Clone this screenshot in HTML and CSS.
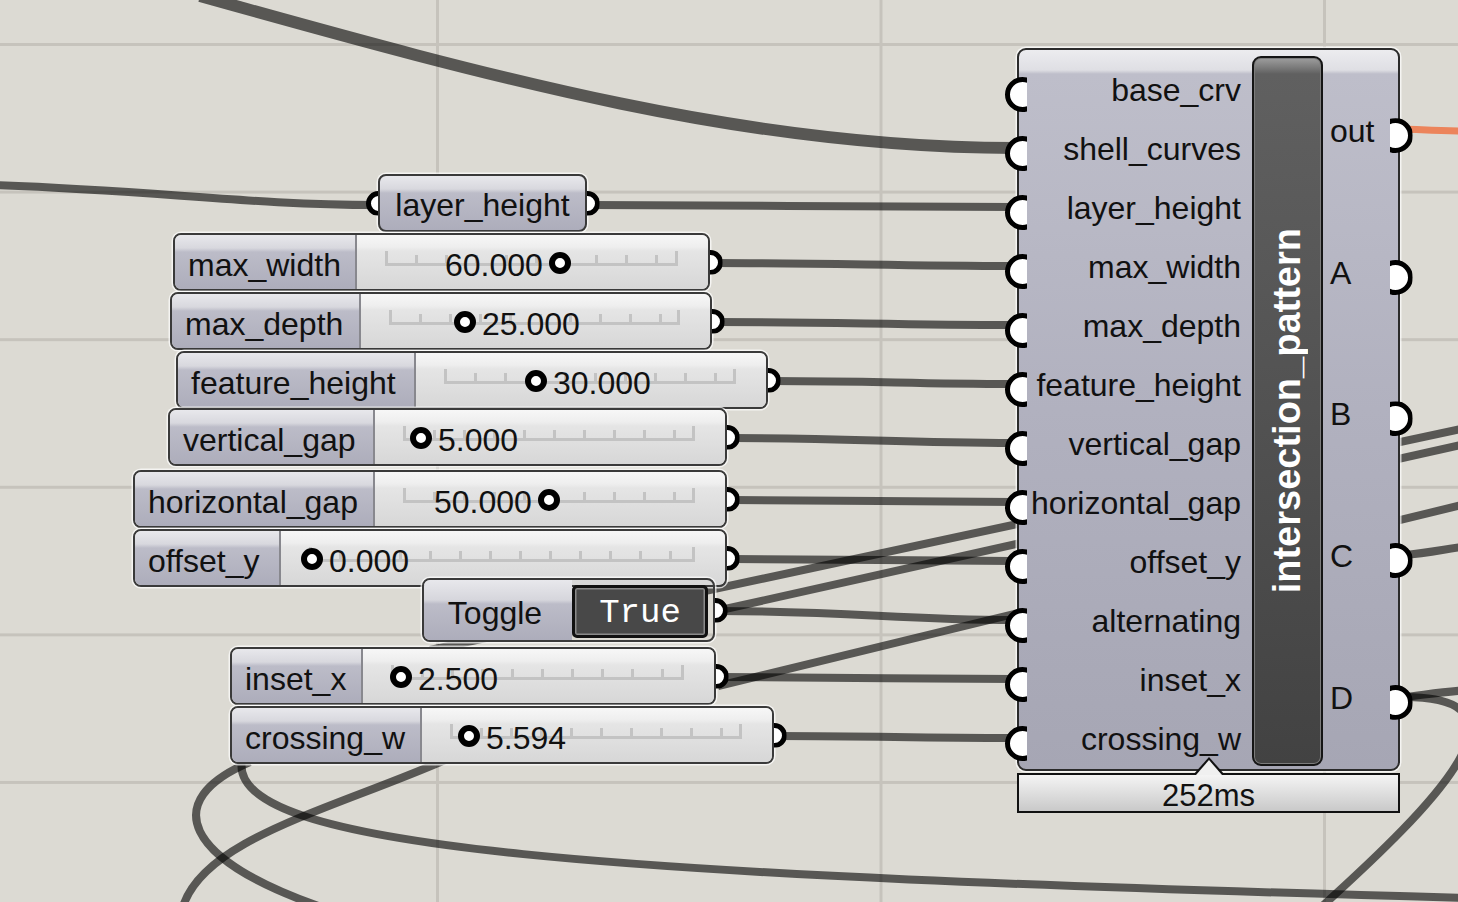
FILE: index.html
```html
<!doctype html>
<html lang="en">
<head>
<meta charset="utf-8">
<title>intersection_pattern</title>
<link rel="stylesheet" href="styles.css">
</head>
<body>
<div id="canvas">

<svg id="wires" width="1458" height="902" viewBox="0 0 1458 902">
  <!-- incoming from off screen -->
  <path class="wire thick" d="M 200 -4 C 500 80, 750 148, 1014 148"/>
  <path class="wire" d="M -10 185 C 150 190, 250 205, 376 205"/>
  <!-- sliders to component -->
  <path class="wire" d="M 590 205 C 720 205, 890 207, 1014 207"/>
  <path class="wire" d="M 714 263 C 830 263, 900 266, 1014 266"/>
  <path class="wire" d="M 716 322 C 830 322, 900 325, 1014 325"/>
  <path class="wire" d="M 772 381 C 880 381, 910 384, 1014 384"/>
  <path class="wire" d="M 731 438 C 850 438, 900 443, 1014 443"/>
  <path class="wire" d="M 731 500 C 850 500, 900 502, 1014 502"/>
  <path class="wire" d="M 731 559 C 850 559, 900 561, 1014 561"/>
  <path class="wire" d="M 718 611 C 850 611, 900 620, 1014 620"/>
  <path class="wire" d="M 720 677 C 850 677, 900 679, 1014 679"/>
  <path class="wire" d="M 778 736 C 880 736, 910 738, 1014 738"/>
  <!-- passing behind the component -->
  <path class="wire" d="M 430 650 L 1470 427"/>
  <path class="wire" d="M 716 611 L 1470 443"/>
  <path class="wire" d="M 718 686 L 1470 503"/>
  <!-- outputs -->
  <path class="wire hot" d="M 1404 129 C 1430 130, 1445 131, 1470 131"/>
  <path class="wire" d="M 1404 555 C 1430 553, 1450 548, 1470 546"/>
  <path class="wire" d="M 1404 697 C 1430 694, 1450 691, 1470 690"/>
  <path class="wire" d="M 1404 697 C 1540 697, 1440 800, 1318 910"/>
  <!-- leaving below -->
  <path class="wire" d="M 242 760 C 225 850, 600 875, 1470 898"/>
  <path class="wire" d="M 445 760 C 330 810, 200 840, 182 910"/>
  <path class="wire" d="M 250 762 C 160 800, 180 860, 330 910"/>
</svg>

<div class="node param" style="left:378px;top:174px;width:209px">
  <span class="port in"></span>
  layer_height
  <span class="port out"></span>
</div>

<div class="node slider" style="left:173px;top:233px;width:537px;--name:180px;--at:88px">
  <div class="name">max_width</div>
  <div class="value"><span class="rail"></span><span class="num">60.000</span><span class="knob"></span></div>
  <span class="port out"></span>
</div>

<div class="node slider" style="left:170px;top:292px;width:542px;--name:187px;--at:93px">
  <div class="name">max_depth</div>
  <div class="value"><span class="rail"></span><span class="knob"></span><span class="num">25.000</span></div>
  <span class="port out"></span>
</div>

<div class="node slider" style="left:176px;top:351px;width:592px;--name:236px;--at:109px">
  <div class="name">feature_height</div>
  <div class="value"><span class="rail"></span><span class="knob"></span><span class="num">30.000</span></div>
  <span class="port out"></span>
</div>

<div class="node slider" style="left:168px;top:408px;width:559px;--name:203px;--at:35px">
  <div class="name">vertical_gap</div>
  <div class="value"><span class="rail"></span><span class="knob"></span><span class="num">5.000</span></div>
  <span class="port out"></span>
</div>

<div class="node slider" style="left:133px;top:470px;width:594px;--name:238px;--at:59px">
  <div class="name">horizontal_gap</div>
  <div class="value"><span class="rail"></span><span class="num">50.000</span><span class="knob"></span></div>
  <span class="port out"></span>
</div>

<div class="node slider" style="left:133px;top:529px;width:594px;--name:144px;--at:20px">
  <div class="name">offset_y</div>
  <div class="value"><span class="rail"></span><span class="knob"></span><span class="num">0.000</span></div>
  <span class="port out"></span>
</div>

<div class="node toggle" style="left:422px;top:578px;width:293px">
  <div class="label">Toggle</div>
  <div class="switch">True</div>
  <span class="port out"></span>
</div>

<div class="node slider" style="left:230px;top:647px;width:486px;--name:129px;--at:27px">
  <div class="name">inset_x</div>
  <div class="value"><span class="rail"></span><span class="knob"></span><span class="num">2.500</span></div>
  <span class="port out"></span>
</div>

<div class="node slider" style="left:230px;top:706px;width:544px;--name:188px;--at:36px">
  <div class="name">crossing_w</div>
  <div class="value"><span class="rail"></span><span class="knob"></span><span class="num">5.594</span></div>
  <span class="port out"></span>
</div>

<div class="component" style="left:1017px;top:48px;width:383px;height:723px">
  <div class="inputs">
    <div class="pin">base_crv</div>
    <div class="pin">shell_curves</div>
    <div class="pin">layer_height</div>
    <div class="pin">max_width</div>
    <div class="pin">max_depth</div>
    <div class="pin">feature_height</div>
    <div class="pin">vertical_gap</div>
    <div class="pin">horizontal_gap</div>
    <div class="pin">offset_y</div>
    <div class="pin">alternating</div>
    <div class="pin">inset_x</div>
    <div class="pin">crossing_w</div>
  </div>
  <div class="title"><span>intersection_pattern</span></div>
  <div class="outputs">
    <div class="pin">out</div>
    <div class="pin">A</div>
    <div class="pin">B</div>
    <div class="pin">C</div>
    <div class="pin">D</div>
  </div>
</div>

<div class="timer" style="left:1017px;top:773px;width:383px">252ms</div>

</div>
</body>
</html>
```

FILE: styles.css
```css
* {
  box-sizing: border-box;
}

html, body {
  margin: 0;
  padding: 0;
  background: #dcdad3;
  overflow: hidden;
}

body {
  font-family: "Liberation Sans", Arial, sans-serif;
  color: #111;
}

#canvas {
  position: relative;
  width: 1458px;
  height: 902px;
  overflow: hidden;
  background-color: #dcdad3;
  background-image:
    linear-gradient(to bottom, #c6c3bc 3px, transparent 3px),
    linear-gradient(to right, #c6c3bc 3px, transparent 3px);
  background-size: 100% 147.6px, 443.5px 100%;
  background-position: 0 43px, 436px 0;
}

#wires {
  position: absolute;
  left: 0;
  top: 0;
}

.wire {
  fill: none;
  stroke: rgba(0, 0, 0, 0.6);
  stroke-width: 8;
}
.wire.thick {
  stroke-width: 12;
}
.wire.hot {
  stroke: #ec845b;
  stroke-width: 7;
}

/* nodes on the canvas */
.node {
  position: absolute;
  height: 58px;
  display: flex;
  border: 2px solid #3a3a3a;
  border-radius: 8px;
  box-shadow: 0 0 0 1.5px rgba(255, 255, 255, 0.7);
  font-size: 32px;
}

.param,
.name,
.toggle .label {
  background: linear-gradient(#e8e8ec 0, #d8d8de 13px, #bcbcc8 17px, #adadbb 100%);
}

.param {
  align-items: center;
  justify-content: center;
  padding-top: 5px;
}

.name {
  width: var(--name);
  display: flex;
  align-items: center;
  padding: 6px 0 0 13px;
  border-radius: 6px 0 0 6px;
  white-space: nowrap;
}

.value {
  flex: 1;
  position: relative;
  display: flex;
  align-items: center;
  gap: 6px;
  padding: 5px 0 0 var(--at);
  border-left: 2px solid #88888e;
  border-radius: 0 6px 6px 0;
  background: linear-gradient(#f7f7f7 0, #eeeeee 12px, #e5e5e5 16px, #d7d7d7 100%);
}

.rail {
  position: absolute;
  left: 28px;
  right: 30px;
  top: 16px;
  height: 15px;
  border: 3px solid #c3c3c3;
  border-top: 0;
  background: repeating-linear-gradient(to right, transparent 0 27px, #c3c3c3 27px 30px) left bottom / 100% 8px no-repeat;
}

.num {
  position: relative;
  line-height: 1;
}

.knob {
  position: relative;
  flex: none;
  width: 22px;
  height: 22px;
  margin-top: -3px;
  border: 6px solid #000;
  border-radius: 50%;
  background: #fff;
}

.toggle {
  height: 64px;
}
.toggle .label {
  width: 148px;
  display: flex;
  align-items: center;
  justify-content: center;
  padding: 6px 6px 0 0;
  border-radius: 6px 0 0 6px;
  background: linear-gradient(#e8e8ec 0, #d6d6dc 20px, #bcbcc8 24px, #adadbb 100%);
}
.toggle .switch {
  flex: 1;
  margin: 5px 5px 2px 0;
  display: flex;
  align-items: center;
  justify-content: center;
  padding-top: 2px;
  background: #484848;
  border: 3px solid #111;
  border-radius: 5px;
  box-shadow: inset 0 0 0 1.5px #8a8a8a;
  color: #fff;
  font-family: "Liberation Mono", monospace;
  font-size: 34px;
}

/* ports: a ring centred on the node edge, half of it shown */
.port,
.pin::before {
  position: absolute;
  top: 50%;
  width: 25px;
  height: 25px;
  margin-top: -12.5px;
  border: 5px solid #000;
  border-radius: 50%;
  background: #fff;
}
.port.out,
.outputs .pin::before {
  right: -14.5px;
  clip-path: inset(0 0 0 12.5px);
}
.port.in,
.inputs .pin::before {
  left: -14.5px;
  clip-path: inset(0 12.5px 0 0);
}

/* component */
.component {
  position: absolute;
  display: flex;
  border: 2px solid #2b2b2b;
  border-radius: 9px;
  box-shadow: 0 0 0 1.5px rgba(255, 255, 255, 0.7);
  background: linear-gradient(#ececef 0, #dfdfe4 20px, #bebeca 24px, #b1b1bf 50%, #a6a6b4 100%);
  font-size: 32px;
}

.inputs,
.outputs {
  display: flex;
  flex-direction: column;
  padding: 10px 0 1px;
}
.inputs {
  width: 233px;
  padding-right: 11px;
}
.outputs {
  flex: 1;
  padding-left: 7px;
}

.pin {
  flex: 1;
  position: relative;
  display: flex;
  align-items: center;
  padding-top: 2px;
}
.inputs .pin {
  justify-content: flex-end;
}
.pin::before {
  content: "";
}

.title {
  width: 71px;
  margin: 6px 0 3px;
  display: flex;
  align-items: center;
  justify-content: center;
  border: 2px solid #151515;
  border-radius: 9px;
  background: linear-gradient(#9e9e9e 0, #757575 11px, #606060 16px, #555 40%, #424242 100%);
  box-shadow: inset 0 0 0 1px #7c7c7c;
}
.title span {
  writing-mode: vertical-rl;
  transform: rotate(180deg);
  color: #fff;
  font-weight: bold;
  font-size: 38px;
}

.timer {
  position: absolute;
  height: 40px;
  display: flex;
  align-items: center;
  justify-content: center;
  padding-top: 5px;
  border: 2px solid #111;
  background: linear-gradient(#f4f4f4, #c9c9c9);
  font-size: 31px;
}
.timer::before,
.timer::after {
  content: "";
  position: absolute;
  left: 50%;
  width: 0;
  height: 0;
  border-style: solid;
  border-color: transparent;
}
.timer::before {
  top: -18px;
  margin-left: -16px;
  border-width: 0 16px 18px;
  border-bottom-color: #111;
}
.timer::after {
  top: -15px;
  margin-left: -13px;
  border-width: 0 13px 15px;
  border-bottom-color: #f0f0f0;
}
```
